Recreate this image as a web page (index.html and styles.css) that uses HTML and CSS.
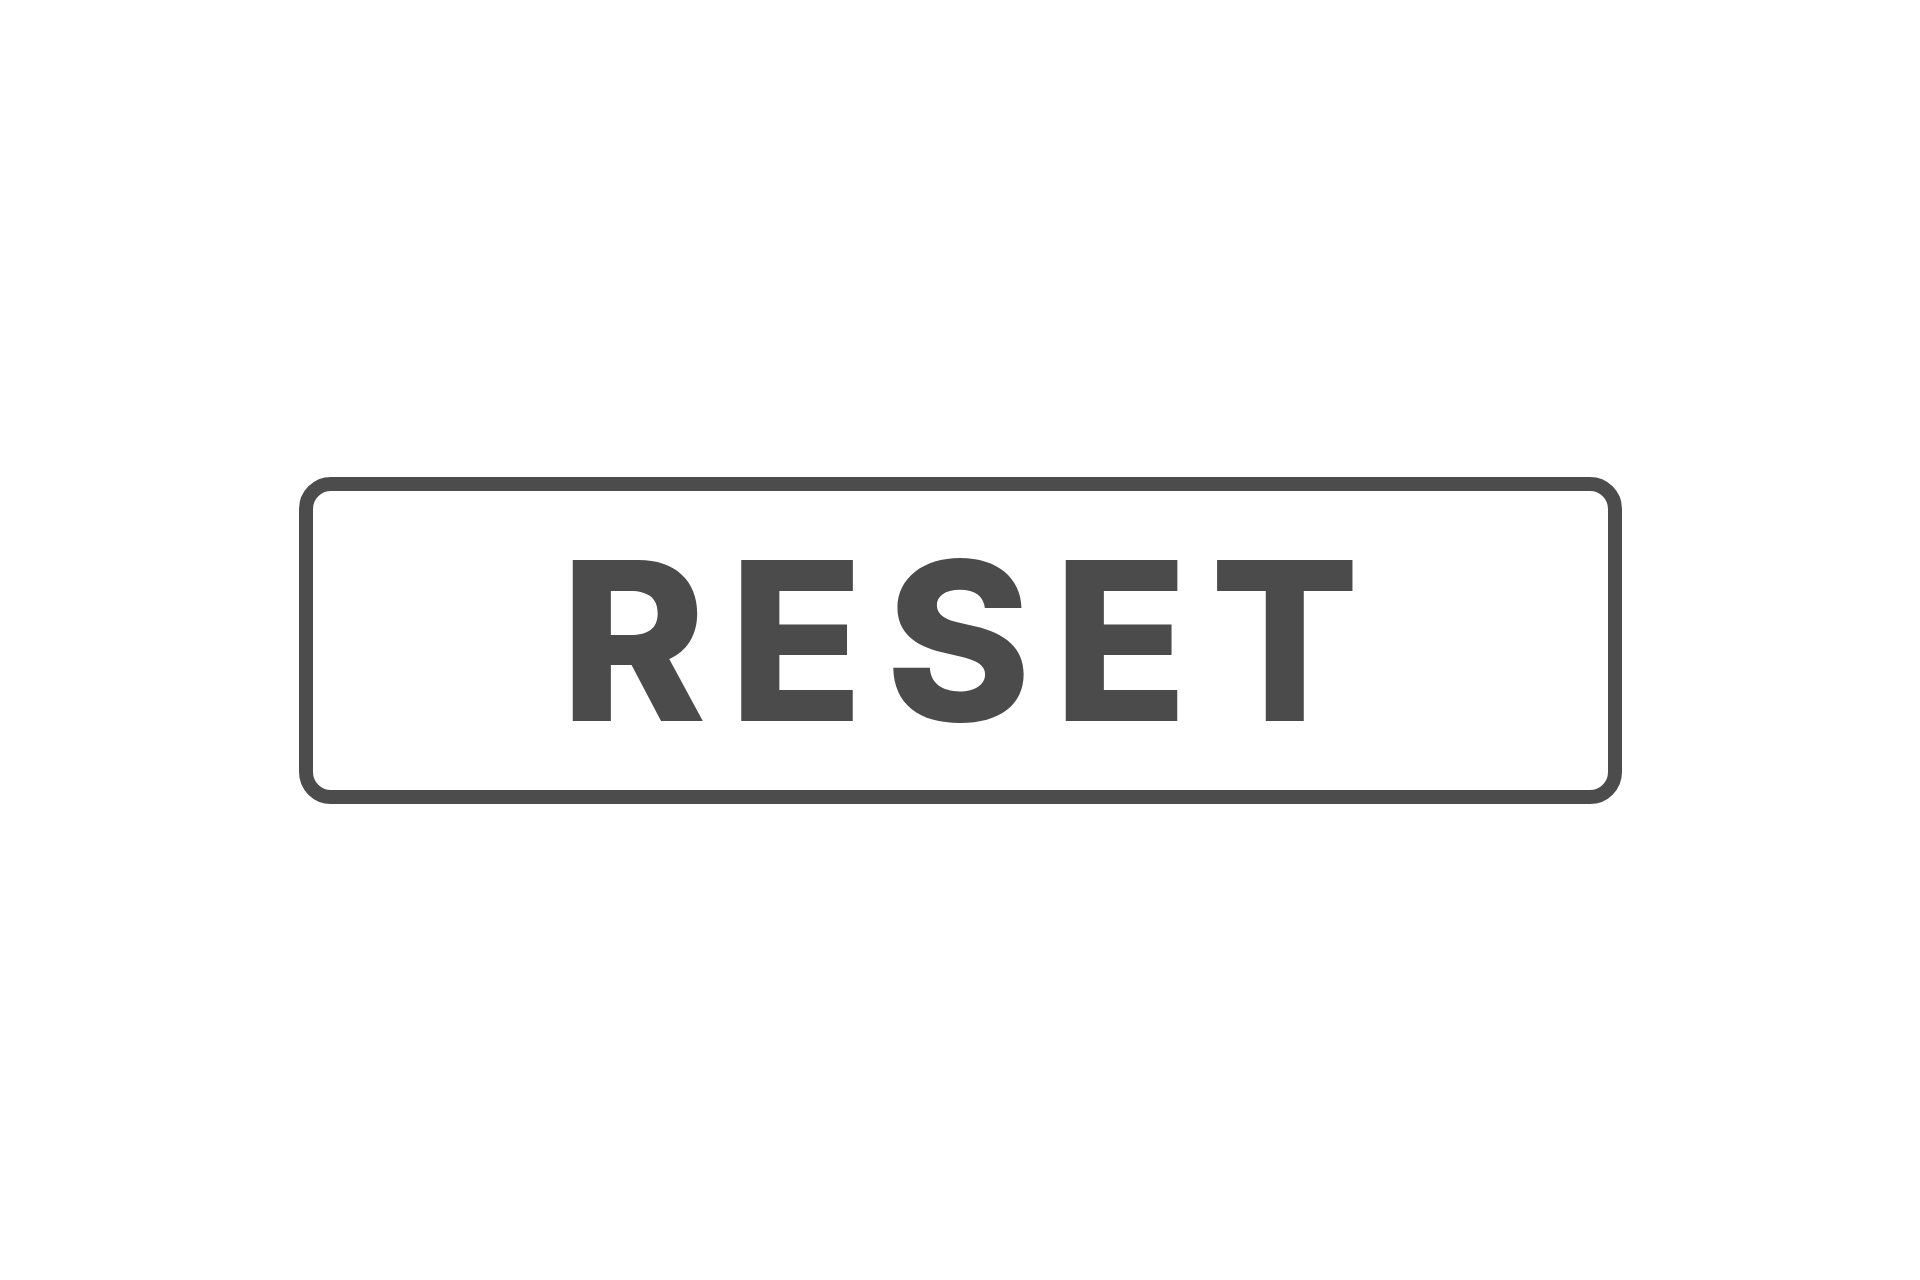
FILE: index.html
```html
<!DOCTYPE html>
<html>
<head>
<meta charset="utf-8">
<link rel="stylesheet" href="styles.css">
</head>
<body>
<div class="stage">
  <div class="reset-box">
    <span class="label">RESET</span>
  </div>
</div>
</body>
</html>
```
FILE: styles.css
```css
html, body {
  margin: 0;
  padding: 0;
  background: #ffffff;
}
.stage {
  width: 1920px;
  height: 1280px;
  display: flex;
  align-items: center;
  justify-content: center;
}
.reset-box {
  box-sizing: border-box;
  width: 1323px;
  height: 327px;
  border: 14px solid #4b4c4b;
  border-radius: 32px;
  display: flex;
  align-items: center;
  justify-content: center;
}
.label {
  font-family: Inter, "Liberation Sans", sans-serif;
  font-weight: 800;
  font-size: 221px;
  line-height: 1;
  color: #4a4b4a;
  letter-spacing: 22px;
  margin-right: -22px;
}
```
